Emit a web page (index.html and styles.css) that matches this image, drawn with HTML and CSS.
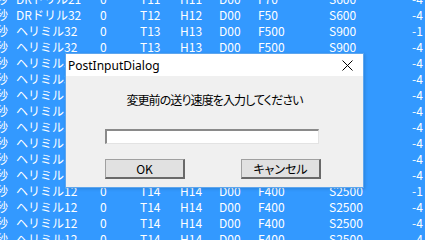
FILE: index.html
```html
<!DOCTYPE html>
<html lang="ja">

<head>
    <meta charset="UTF-8">
    <title>PostInputDialog</title>
    <link rel="stylesheet" href="styles.css">
</head>

<body>
    <div class="grid-list" id="rows">
        <!-- rows are built below -->
    </div>

    <div class="dialog">
        <div class="title-bar">
            <span class="title">PostInputDialog</span>
            <svg class="close" width="11" height="11" viewBox="0 0 11 11">
                <path d="M0.5 0.5 L10.5 10.5 M10.5 0.5 L0.5 10.5" stroke="#000" stroke-width="1" fill="none"/>
            </svg>
        </div>
        <div class="dialog-body">
            <div class="message">変更前の送り速度を入力してください</div>
            <input type="text" class="speed-input">
            <div class="buttons">
                <button class="btn">OK</button>
                <button class="btn">キャンセル</button>
            </div>
        </div>
    </div>

    <script>
        const rows = [
            ['DRドリル21', 'T11', 'H11', 'F70', 'S600', '-4'],
            ['DRドリル32', 'T12', 'H12', 'F50', 'S600', '-4'],
            ['ヘリミル32', 'T13', 'H13', 'F500', 'S900', '-1'],
            ['ヘリミル32', 'T13', 'H13', 'F500', 'S900', '-4'],
            ['ヘリミル32', 'T13', 'H13', 'F500', 'S900', '-4'],
            ['ヘリミル32', 'T13', 'H13', 'F500', 'S900', '-4'],
            ['ヘリミル16', 'T13', 'H13', 'F450', 'S1200', '-4'],
            ['ヘリミル16', 'T13', 'H13', 'F450', 'S1200', '-4'],
            ['ヘリミル16', 'T13', 'H13', 'F450', 'S1200', '-4'],
            ['ヘリミル12', 'T14', 'H14', 'F400', 'S2500', '-4'],
            ['ヘリミル12', 'T14', 'H14', 'F400', 'S2500', '-4'],
            ['ヘリミル12', 'T14', 'H14', 'F400', 'S2500', '-4'],
            ['ヘリミル12', 'T14', 'H14', 'F400', 'S2500', '-1'],
            ['ヘリミル12', 'T14', 'H14', 'F400', 'S2500', '-4'],
            ['ヘリミル12', 'T14', 'H14', 'F400', 'S2500', '-4'],
            ['ヘリミル12', 'T14', 'H14', 'F400', 'S2500', '-4']
        ];

        const list = document.getElementById('rows');
        rows.forEach(r => {
            const cells = ['秒', r[0], '0', r[1], r[2], 'D00', r[3], r[4], r[5]];
            const row = document.createElement('div');
            row.className = 'row';
            cells.forEach(text => {
                const cell = document.createElement('span');
                cell.textContent = text;
                row.appendChild(cell);
            });
            list.appendChild(row);
        });
    </script>
</body>

</html>
```

FILE: styles.css
```css
body {
    margin: 0;
    width: 425px;
    height: 240px;
    overflow: hidden;
    background-color: #3399ff;
    font-family: "Noto Sans CJK JP", sans-serif;
}

.grid-list {
    margin-top: -9px;
    margin-left: -4px;
    color: #fff;
    font-size: 12px;
}

.row {
    display: grid;
    grid-template-columns: 20px 84px 40px 40px 39px 39px 71px 83px 20px;
    height: 16px;
    line-height: 16px;
    white-space: nowrap;
}

.dialog {
    position: absolute;
    left: 65px;
    top: 53px;
    width: 299px;
    height: 135px;
    box-sizing: border-box;
    border: 1px solid #5ea6ee;
    background-color: #f0f0f0;
    display: flex;
    flex-direction: column;
    box-shadow: 1px 1px 3px rgba(0, 0, 0, 0.15);
}

.title-bar {
    height: 22px;
    background-color: #fff;
    display: flex;
    align-items: center;
    justify-content: space-between;
    padding: 0 5px 0 2px;
}

.title {
    font-family: "Noto Sans", sans-serif;
    font-size: 12px;
    color: #000;
}

.close {
    margin-right: 5px;
}

.dialog-body {
    display: flex;
    flex-direction: column;
    padding-left: 39px;
    color: #000;
    font-size: 12px;
}

.message {
    margin-top: 16px;
    margin-left: -39px;
    height: 16px;
    line-height: 16px;
    text-align: center;
    font-feature-settings: "palt";
    letter-spacing: -0.9px;
}

.speed-input {
    margin: 21px 0 0 0;
    width: 214px;
    height: 15px;
    box-sizing: border-box;
    padding: 0;
    background-color: #fff;
    border-style: solid;
    border-width: 2px 1px 1px 2px;
    border-color: #8a8a8a #e3e3e3 #e3e3e3 #8a8a8a;
}

.buttons {
    display: flex;
    gap: 56px;
    margin-top: 15px;
}

.btn {
    width: 80px;
    height: 20px;
    padding: 0;
    box-sizing: border-box;
    background-color: #e1e1e1;
    border-style: solid;
    border-width: 1px 2px 2px 1px;
    border-color: #a0a0a0 #696969 #696969 #a0a0a0;
    font-family: "Noto Sans CJK JP", sans-serif;
    font-size: 12px;
    color: #000;
    font-feature-settings: "palt";
}
```
